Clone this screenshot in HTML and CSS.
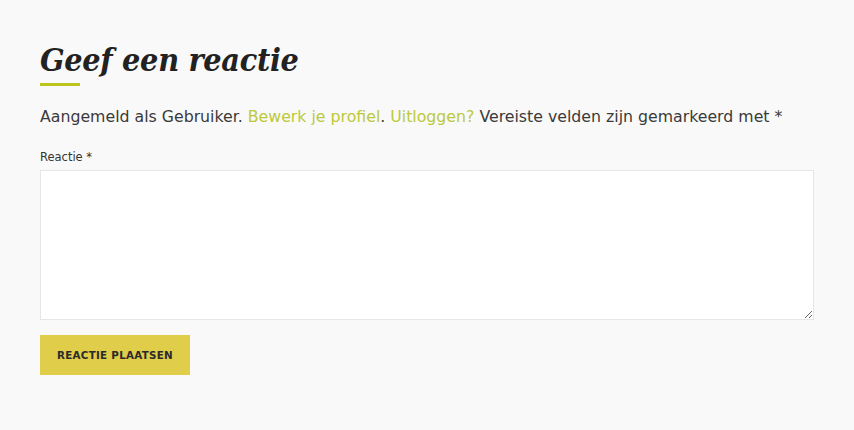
FILE: index.html
```html
<!DOCTYPE html>
<html lang="nl">
<head>
<meta charset="utf-8">
<title>Geef een reactie</title>
<link rel="stylesheet" href="styles.css">
</head>
<body>
<section class="respond">
  <h3 class="title">Geef een reactie</h3>
  <p class="logged">Aangemeld als Gebruiker. <a href="#">Bewerk je profiel</a>. <a href="#">Uitloggen?</a> Vereiste velden zijn gemarkeerd met *</p>
  <form class="form">
    <label class="label" for="c">Reactie *</label>
    <textarea id="c" class="area"></textarea>
    <button type="button" class="submit">Reactie plaatsen</button>
  </form>
</section>
</body>
</html>
```
FILE: styles.css
```css
html, body { margin: 0; padding: 0; }
body {
  background: #f9f9f9;
  font-family: "DejaVu Sans", sans-serif;
  color: #333;
}
.respond { padding: 38px 40px 0 40px; }
.title {
  margin: 0;
  font-family: "DejaVu Serif", serif;
  font-stretch: semi-condensed;
  font-style: italic;
  font-weight: bold;
  font-size: 32px;
  line-height: 44px;
  color: #222;
  letter-spacing: -0.3px;
}
.title::after {
  content: "";
  display: block;
  width: 40px;
  height: 3px;
  background: #bcc51c;
  margin-top: 1px;
}
.logged {
  margin: 18px 0 0 0;
  font-size: 15.75px;
  line-height: 26px;
  color: #3a3a3a;
  font-weight: normal;
}
.logged a { color: #bcc93a; text-decoration: none; }
.form { display: flex; flex-direction: column; align-items: flex-start; margin-top: 19px; }
.label { font-size: 11.5px; line-height: 16px; color: #333; margin-bottom: 5px; }
.area {
  box-sizing: border-box;
  width: 774px;
  height: 150px;
  border: 1px solid #e6e6e6;
  background: #fff;
  margin: 0;
}
.submit {
  margin-top: 15px;
  width: 150px;
  height: 40px;
  border: 0;
  background: #e0cd4a;
  color: #2a2a2a;
  font-family: "DejaVu Sans", sans-serif;
  font-weight: bold;
  font-size: 10.3px;
  text-transform: uppercase;
  letter-spacing: 0.3px;
  padding: 0;
}
```
